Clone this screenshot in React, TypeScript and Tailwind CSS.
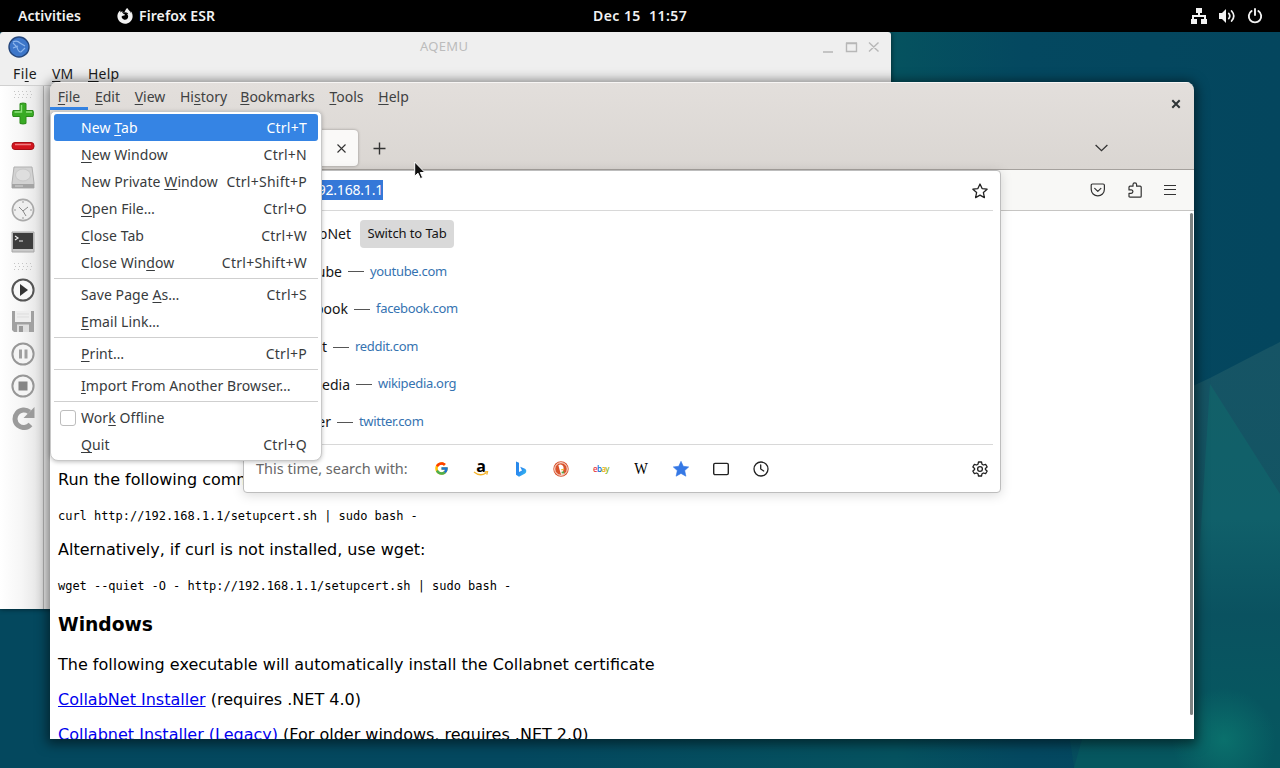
import type { ReactNode } from 'react';
import { FcGoogle } from 'react-icons/fc';
import { FaFirefoxBrowser } from 'react-icons/fa';

interface MenuEntry {
  label: string;
  accessKey: number;
  shortcut?: string;
  active?: boolean;
  checkbox?: boolean;
}

const fileMenu: MenuEntry[][] = [
  [
    { label: 'New Tab', accessKey: 4, shortcut: 'Ctrl+T', active: true },
    { label: 'New Window', accessKey: 0, shortcut: 'Ctrl+N' },
    { label: 'New Private Window', accessKey: 12, shortcut: 'Ctrl+Shift+P' },
    { label: 'Open File…', accessKey: 0, shortcut: 'Ctrl+O' },
    { label: 'Close Tab', accessKey: 0, shortcut: 'Ctrl+W' },
    { label: 'Close Window', accessKey: 9, shortcut: 'Ctrl+Shift+W' },
  ],
  [
    { label: 'Save Page As…', accessKey: 10, shortcut: 'Ctrl+S' },
    { label: 'Email Link…', accessKey: 0 },
  ],
  [{ label: 'Print…', accessKey: 0, shortcut: 'Ctrl+P' }],
  [{ label: 'Import From Another Browser…', accessKey: 0 }],
  [
    { label: 'Work Offline', accessKey: 3, checkbox: true },
    { label: 'Quit', accessKey: 0, shortcut: 'Ctrl+Q' },
  ],
];

const menuBar = [
  { label: 'File', accessKey: 0, width: 'w-[38px]' },
  { label: 'Edit', accessKey: 0, width: 'w-[39px]' },
  { label: 'View', accessKey: 0, width: 'w-[46px]' },
  { label: 'History', accessKey: 2, width: 'w-[61px]' },
  { label: 'Bookmarks', accessKey: 0, width: 'w-[87px]' },
  { label: 'Tools', accessKey: 0, width: 'w-[51px]' },
  { label: 'Help', accessKey: 0, width: 'w-[43px]' },
];

const topSites = [
  { title: 'YouTube', url: 'youtube.com', width: 'w-[91px]' },
  { title: 'Facebook', url: 'facebook.com', width: 'w-[97px]' },
  { title: 'Reddit', url: 'reddit.com', width: 'w-[76px]' },
  { title: 'Wikipedia', url: 'wikipedia.org', width: 'w-[99px]' },
  { title: 'Twitter', url: 'twitter.com', width: 'w-[80px]' },
];

function AccessLabel({ text, index }: { text: string; index: number }) {
  return (
    <span className="whitespace-pre">
      {text.slice(0, index)}
      <span className="underline decoration-1 underline-offset-2">{text[index]}</span>
      {text.slice(index + 1)}
    </span>
  );
}

function Wallpaper() {
  return (
    <svg className="absolute inset-0" width="1280" height="768" viewBox="0 0 1280 768">
      <defs>
        <linearGradient id="sky" x1="0" y1="0" x2="1" y2="0">
          <stop offset="0" stopColor="#04485e" />
          <stop offset="0.4" stopColor="#04485f" />
          <stop offset="0.7" stopColor="#05525f" />
          <stop offset="0.8" stopColor="#044860" />
          <stop offset="1" stopColor="#04465e" />
        </linearGradient>
        <linearGradient id="facet" x1="0" y1="0" x2="0" y2="1">
          <stop offset="0" stopColor="#165465" />
          <stop offset="0.5" stopColor="#125563" />
          <stop offset="1" stopColor="#045a60" />
        </linearGradient>
        <linearGradient id="ridge" x1="0" y1="0" x2="0" y2="1">
          <stop offset="0" stopColor="#126068" />
          <stop offset="0.35" stopColor="#10606a" />
          <stop offset="0.6" stopColor="#0a5260" />
          <stop offset="1" stopColor="#045a60" />
        </linearGradient>
        <radialGradient id="glow" cx="1224" cy="740" r="52" gradientUnits="userSpaceOnUse">
          <stop offset="0" stopColor="#0a706c" />
          <stop offset="1" stopColor="#0a706c" stopOpacity="0" />
        </radialGradient>
      </defs>
      <rect width="1280" height="768" fill="url(#sky)" />
      <path d="M1180 392 L1210 378 L1280 342 V768 H1074 Z" fill="url(#facet)" />
      <path d="M1210 384 L1280 494 V768 H1186 Z" fill="url(#ridge)" />
      <path d="M1064 700 L1074 768 H1280 V700 Z" fill="#07545e" fillOpacity="0.5" />
      <path d="M1100 640 H1280 V768 H1100 Z" fill="url(#glow)" />
    </svg>
  );
}

function TopBar() {
  return (
    <header className="relative z-10 flex h-8 items-center bg-black text-[14px] font-semibold text-[#f2f2f2]">
      <span className="ml-[18px] w-[99px] pb-[2px] tracking-[0.05px]">Activities</span>
      <FaFirefoxBrowser size={16} />
      <span className="ml-[6px] pb-[2px] tracking-[0.1px]">Firefox ESR</span>
      <span className="absolute left-[593px] whitespace-pre pb-[2px] tracking-[0.45px]">Dec 15  11:57</span>
      <div className="ml-auto mr-[17px] flex items-center gap-3">
        <svg width="16" height="16" viewBox="0 0 16 16" fill="#f2f2f2">
          <path d="M5 0h6v5H9v2h6v4h1v5h-6v-5h3V9H3v2h3v5H0v-5h1V7h6V5H5z" />
        </svg>
        <svg width="16" height="16" viewBox="0 0 16 16" fill="none" stroke="#f2f2f2" strokeWidth="1.7" strokeLinecap="round">
          <path d="M0 5h3l4-4v14l-4-4H0z" fill="#f2f2f2" stroke="none" />
          <path d="M9.8 5.5q2 2.5 0 5M12.6 3q4.4 5 0 10" />
        </svg>
        <svg width="16" height="16" viewBox="0 0 16 16" fill="none" stroke="#f2f2f2" strokeWidth="1.9" strokeLinecap="round">
          <path d="M4.6 3a6.2 6.2 0 1 0 6.8 0M8 1v6" />
        </svg>
      </div>
    </header>
  );
}

function ToolIcon({ children }: { children: ReactNode }) {
  return (
    <div className="flex h-8 items-center justify-center">
      <svg width="24" height="24" viewBox="0 0 24 24" fill="none">
        {children}
      </svg>
    </div>
  );
}

function Grip() {
  return (
    <svg width="18" height="7" viewBox="0 0 18 7" fill="#c4c4c4">
      {[0, 4, 8, 12, 16].map((x) => (
        <g key={x}>
          <rect x={x} y="0" width="1" height="1" />
          <rect x={x + 1} y="3" width="1" height="1" />
          <rect x={x} y="6" width="1" height="1" />
        </g>
      ))}
    </svg>
  );
}

function EmulatorToolbar() {
  return (
    <div className="flex w-[44px] flex-col border-r border-[#b4b4b4] bg-linear-to-r from-white via-[#f6f6f6] to-[#e3e3e3] pl-[2px]">
      <div className="flex h-3 items-center justify-center pt-1">
        <Grip />
      </div>
      <ToolIcon>
        <path d="M9 1.5q3-1 6 0v7h7q1 3 0 6h-7v7q-3 1-6 0v-7H2q-1-3 0-6h7z" fill="#38ab24" stroke="#2c8a1a" strokeLinejoin="round" />
        <path d="M10.5 3v7H3.500M15 10h6" stroke="#8fe27e" strokeWidth="1.4" />
      </ToolIcon>
      <ToolIcon>
        <rect x="1" y="8.500" width="22" height="7" rx="3" fill="#d3151e" stroke="#a50f16" />
        <path d="M4 10.500h16" stroke="#ef7d80" strokeWidth="1.500" />
      </ToolIcon>
      <ToolIcon>
        <path d="M3 1h18l2 16v5H1v-5z" fill="#d2d2d2" stroke="#b0b0b0" />
        <ellipse cx="12" cy="9" rx="7.500" ry="6" fill="#dedede" stroke="#c8c8c8" />
        <path d="M1 18h22v4H1z" fill="#a4a4a4" />
        <path d="M4 20h8" stroke="#d5d5d5" />
      </ToolIcon>
      <ToolIcon>
        <circle cx="12" cy="12" r="10.600" fill="#efefef" stroke="#a9a9a9" strokeWidth="1.600" />
        <path d="M12 3v2M12 19v2M3 12h2M19 12h2" stroke="#999" />
        <path d="M8 9l4 4 5-4M12 13l3 5" stroke="#888" />
      </ToolIcon>
      <ToolIcon>
        <path d="M1 2h22v20H1z" fill="#c9c9c9" stroke="#a8a8a8" />
        <path d="M2 3h20v16H2z" fill="#3d3d3d" />
        <path d="M4 6l3 2-3 2M8 11h4" stroke="#eee" strokeWidth="1.200" />
      </ToolIcon>
      <div className="flex h-4 items-center justify-center">
        <Grip />
      </div>
      <ToolIcon>
        <circle cx="12" cy="12" r="10.600" fill="#f7f7f7" stroke="#555" strokeWidth="2" />
        <path d="M9 6l8 6-8 6z" fill="#333" />
      </ToolIcon>
      <ToolIcon>
        <path d="M1 1h22v21H3l-2-2z" fill="#a1a1a1" />
        <path d="M4 1h16v11H4z" fill="#eee" />
        <path d="M6 4h12M6 7h12" stroke="#ddd" />
        <path d="M6 14.500h12v7.500H6z" fill="#dedede" />
        <path d="M8 16h4v6H8z" fill="#999" />
      </ToolIcon>
      <ToolIcon>
        <circle cx="12" cy="12" r="10.600" fill="#f4f4f4" stroke="#979797" strokeWidth="2" />
        <path d="M8 7.500h3v9H8zM13.500 7.500h3v9h-3z" fill="#a0a0a0" />
      </ToolIcon>
      <ToolIcon>
        <circle cx="12" cy="12" r="10.600" fill="#f4f4f4" stroke="#979797" strokeWidth="2" />
        <path d="M7.500 7.500h9v9h-9z" fill="#858585" />
      </ToolIcon>
      <ToolIcon>
        <path d="M19.500 18.500a8.800 8.800 0 1 1-1-12.500" stroke="#9b9b9b" strokeWidth="5" />
        <path d="M23.500 1v11H12.500z" fill="#9b9b9b" />
      </ToolIcon>
    </div>
  );
}

function EmulatorWindow() {
  return (
    <section className="absolute left-0 top-8 flex h-[577px] w-[891px] flex-col rounded-t-[3px] bg-[#efefef] shadow-[0_0_5px_rgba(0,0,0,0.6)]">
      <div className="flex h-[30px] items-center">
        <svg className="ml-2" width="22" height="22" viewBox="0 0 22 22">
          <circle cx="11" cy="11" r="10" fill="#3d76c9" stroke="#24467c" strokeWidth="1.4" />
          <path d="M5 6q4-2 7 1l5 3M5 7l4 4q1 5 4 5l4-4M10 10l-5 2" fill="none" stroke="#8eb7ed" strokeWidth="1.2" />
        </svg>
        <span className="ml-[390px] text-[13px] tracking-[0.3px] text-[#bcbcbc]">AQEMU</span>
        <svg className="ml-auto mr-[9px]" width="60" height="14" viewBox="0 0 60 14" fill="none" stroke="#b7b7b7" strokeWidth="1.4">
          <path d="M1 12h10M24.5 3.5h10v8h-10zM24 3h11M47 2.5l9.5 9M56.5 2.5l-9.5 9" />
        </svg>
      </div>
      <nav className="flex h-[23px] items-center text-[14px] text-[#1b1b1b]">
        <span className="ml-[13px] w-[39px] tracking-[0.4px]"><AccessLabel text="File" index={2} /></span>
        <span className="w-[36px]"><AccessLabel text="VM" index={0} /></span>
        <span className="tracking-[0.2px]"><AccessLabel text="Help" index={0} /></span>
      </nav>
      <div className="flex min-h-0 flex-1 border-t border-[#d0d0d0]">
        <EmulatorToolbar />
      </div>
    </section>
  );
}

function PageContent() {
  return (
    <article className="flex flex-1 flex-col overflow-hidden bg-white pl-2 pt-[259px] font-['DejaVu_Sans',sans-serif] text-[16px] leading-[19px] text-black">
      <p>Run the following command:</p>
      <pre className="mt-[20px] font-['DejaVu_Sans_Mono',monospace] text-[12px] leading-[14px] tracking-[-0.03px]">curl http://192.168.1.1/setupcert.sh | sudo bash -</pre>
      <p className="mt-[17px]">Alternatively, if curl is not installed, use wget:</p>
      <pre className="mt-[20px] font-['DejaVu_Sans_Mono',monospace] text-[12px] leading-[14px] tracking-[-0.03px]">wget --quiet -O - http://192.168.1.1/setupcert.sh | sudo bash -</pre>
      <h3 className="mt-[21px] text-[18.72px] font-bold leading-[22px]">Windows</h3>
      <p className="mt-[19px]">The following executable will automatically install the Collabnet certificate</p>
      <p className="mt-4"><a className="text-[#0000ee] underline">CollabNet Installer</a> (requires .NET 4.0)</p>
      <p className="mt-4 shrink-0"><a className="text-[#0000ee] underline">Collabnet Installer (Legacy)</a> (For older windows, requires .NET 2.0)</p>
    </article>
  );
}

function SearchEngines() {
  return (
    <div className="flex items-center">
      <span className="flex w-10 justify-center"><FcGoogle size={15} /></span>
      <span className="flex w-10 justify-center">
        <span className="relative h-4 w-4 text-center font-['Open_Sans',sans-serif] text-[16px] font-bold leading-[10px] text-black">
          a
          <svg className="absolute left-0 top-[10px]" width="16" height="6" viewBox="0 0 16 6" fill="none" stroke="#f5b32a" strokeWidth="1.3">
            <path d="M1 1q6 5 12 1M11.5 1l3-.3-.7 3" />
          </svg>
        </span>
      </span>
      <svg className="mx-3" width="16" height="16" viewBox="0 0 16 16">
        <defs>
          <linearGradient id="bing" x1="0" y1="0" x2="1" y2="1">
            <stop offset="0" stopColor="#2687e8" />
            <stop offset="0.5" stopColor="#2b8cf0" />
            <stop offset="1" stopColor="#35c5ee" />
          </linearGradient>
        </defs>
        <path d="M3 .5l3 1.2v9.300l3-1.5-1.800-3.700 4.800 1.900q1.800 1 1.200 3.300-.5 1.200-1.500 1.800L6 15.800l-3-2z" fill="url(#bing)" />
      </svg>
      <svg className="mx-3" width="16" height="16" viewBox="0 0 16 16">
        <circle cx="8" cy="8" r="7.700" fill="#d9532c" />
        <circle cx="8" cy="8" r="6.300" fill="none" stroke="#fff" strokeWidth=".9" />
        <path d="M5.400 4.200q2-1.500 4 0 1.500 1.200 1.200 3.800l-.6 2.200 1 3-2.800.6-1.400-4.300z" fill="#fff" />
        <path d="M8 8.200l3.200-.4v1L8.500 9.400z" fill="#f3b72b" />
        <path d="M8.500 10.800l2.500-.6.200 2-2.500.3z" fill="#5aa343" />
      </svg>
      <span className="flex w-10 justify-center text-[8px] font-medium leading-[12px] tracking-[-0.6px]">
        <span className="text-[#e53238]">e</span>
        <span className="text-[#0064d2]">b</span>
        <span className="text-[#e8a800]">a</span>
        <span className="text-[#86b817]">y</span>
      </span>
      <span className="flex w-10 scale-x-90 justify-center font-['Liberation_Serif',serif] text-[16px] leading-4 text-black">W</span>
      <svg className="mx-3" width="16" height="16" viewBox="0 0 16 16" fill="#3578e5">
        <path d="M8 .3l2.3 5 5.4.6-4 3.7 1.2 5.6L8 12.4l-4.9 2.8 1.2-5.6-4-3.7 5.4-.6z" stroke="#3578e5" strokeWidth=".6" strokeLinejoin="round" />
      </svg>
      <svg className="mx-3" width="16" height="16" viewBox="0 0 16 16" fill="none" stroke="#222" strokeWidth="1.4">
        <rect x=".7" y="2.4" width="14.6" height="11.2" rx="1.3" />
      </svg>
      <svg className="mx-3" width="16" height="16" viewBox="0 0 16 16" fill="none" stroke="#222" strokeWidth="1.3" strokeLinecap="round">
        <circle cx="8" cy="8" r="7" />
        <path d="M7.7 4v4l3 2" />
      </svg>
    </div>
  );
}

function UrlPopup() {
  return (
    <div className="absolute left-[193px] top-[88px] flex h-[323px] w-[758px] flex-col rounded-b-[4px] rounded-tr-[4px] border border-[#bdbdbd] bg-white px-[7px] text-[14px] text-[#151515] shadow-[0_2px_12px_rgba(0,0,0,0.15)]">
      <div className="flex h-10 items-center justify-between border-b border-[#d8d8d8]">
        <div className="flex w-[132px] justify-end pb-px">
          <span className="bg-[#3578d8] leading-5 text-white tracking-[-0.2px]">192.168.1.1</span>
        </div>
        <svg className="mr-[5px]" width="16" height="16" viewBox="0 0 16 16" fill="none" stroke="#222" strokeWidth="1.3" strokeLinejoin="round">
          <path d="M8 1l2.1 4.6 5 .6-3.7 3.4 1 5L8 12.1l-4.4 2.5 1-5L.9 6.2l5-.6z" />
        </svg>
      </div>
      <div className="flex h-[233px] flex-col pt-1">
        <div className="flex h-[37.6px] items-center">
          <span className="w-[100px] text-right">CollabNet</span>
          <span className="ml-[9px] flex h-7 w-[94px] items-center justify-center rounded-[4px] bg-[#d9d9d9] text-[13px] tracking-[-0.1px]">Switch to Tab</span>
        </div>
        {topSites.map((site) => (
          <div key={site.title} className="flex h-[37.6px] items-center">
            <span className={`text-right ${site.width}`}>{site.title}</span>
            <span className="mx-[6px] mt-px h-px w-4 bg-[#555]" />
            <span className="text-[13px] tracking-[-0.32px] text-[#3573b1]">{site.url}</span>
          </div>
        ))}
      </div>
      <div className="flex flex-1 items-center border-t border-[#d8d8d8]">
        <span className="ml-[5px] w-[165px] text-[14.5px] text-[#686868]">This time, search with:</span>
        <SearchEngines />
        <svg className="ml-auto mr-[5px]" width="16" height="16" viewBox="0 0 16 16" fill="none" stroke="#222" strokeWidth="1.3" strokeLinejoin="round">
          <path d="M6.5 1h3l.5 2.2 1.4.8 2.2-.7 1.5 2.6-1.7 1.5v1.2l1.7 1.5-1.5 2.6-2.200-.7-1.4.8-.5 2.2h-3L6 12.8l-1.4-.8-2.2.7L.9 10.100l1.700-1.500V7.400L.9 5.900l1.500-2.600 2.200.7L6 3.200z" />
          <circle cx="8" cy="8" r="2.4" />
        </svg>
      </div>
    </div>
  );
}

function FileMenu() {
  return (
    <div className="absolute left-0 top-[29px] flex w-[272px] flex-col rounded-b-[8px] rounded-t-[5px] border border-[#c8c8c8] bg-white px-[3px] py-[2px] text-[14px] text-[#383b3d] shadow-[0_1px_4px_rgba(0,0,0,0.25)]">
      {fileMenu.map((group, i) => (
        <div key={group[0].label} className={i > 0 ? 'mt-[2px] border-t border-[#cfcfcf] pt-[2px]' : ''}>
          {group.map((item) => (
            <div
              key={item.label}
              className={`flex h-[27px] items-center rounded-[3px] pr-[11px] ${item.active ? 'bg-[#3584e4] text-white' : ''}`}
            >
              <span className="flex w-[27px] shrink-0 pl-[6px]">
                {item.checkbox && <span className="h-4 w-4 rounded-[3px] border border-[#bdbdbd] bg-white" />}
              </span>
              <span className="tracking-[0.08px]">
                <AccessLabel text={item.label} index={item.accessKey} />
              </span>
              <span className="ml-auto tracking-[0.25px]">{item.shortcut}</span>
            </div>
          ))}
        </div>
      ))}
    </div>
  );
}

function FirefoxWindow() {
  return (
    <section className="absolute left-[50px] top-[82px] h-[657px] w-[1144px] rounded-t-[8px] shadow-[0_2px_12px_3px_rgba(0,0,0,0.5)]">
      <div className="flex h-full flex-col overflow-hidden rounded-t-[8px]">
        <div className="flex h-[88px] flex-col border-b border-[#a5a19d] bg-linear-to-b from-[#e3dfdc] to-[#dad6d2] shadow-[inset_0_1px_0_#f7f5f4]">
          <div className="flex h-[44px] justify-between">
            <nav className="flex h-[28px] text-[14px] text-[#3f4142]">
              {menuBar.map((item, i) => (
                <span
                  key={item.label}
                  className={`flex items-center justify-center border-b-[3px] pt-[3px] ${item.width} ${i === 0 ? 'border-[#3584e4]' : 'border-transparent'}`}
                >
                  <AccessLabel text={item.label} index={item.accessKey} />
                </span>
              ))}
            </nav>
            <svg className="mr-[13px] mt-[17px]" width="10" height="10" viewBox="0 0 10 10" stroke="#2e3436" strokeWidth="2">
              <path d="M1.3 1.3l7.4 7.4M8.7 1.3L1.3 8.7" />
            </svg>
          </div>
          <div className="flex h-[43px] items-center pt-px">
            <div className="ml-1 flex h-9 w-[304px] items-center justify-end rounded-[4px] bg-[#faf9f8] pr-3 shadow-[0_0_3px_rgba(0,0,0,0.35)]">
              <svg width="9" height="9" viewBox="0 0 9 9" stroke="#333" strokeWidth="1.1">
                <path d="M.5.5l8 8M8.5.5l-8 8" />
              </svg>
            </div>
            <svg className="ml-[15px]" width="13" height="13" viewBox="0 0 13 13" stroke="#333" strokeWidth="1.4">
              <path d="M6.5.5v12M.5 6.5h12" />
            </svg>
            <svg className="ml-auto mr-[86px]" width="13" height="8" viewBox="0 0 13 8" fill="none" stroke="#333" strokeWidth="1.3">
              <path d="M.6 1l5.9 5.700L12.400 1" />
            </svg>
          </div>
        </div>
        <div className="flex h-[41px] items-center justify-end border-b border-[#c6c5c3] bg-[#f8f8f6]">
          <svg className="mr-[21px]" width="16" height="16" viewBox="0 0 16 16" fill="none" stroke="#333" strokeWidth="1.2" strokeLinecap="round" strokeLinejoin="round">
            <path d="M2.500 2h10.600q1.300 0 1.300 1.300v4A6.600 6.600 0 0 1 1.200 7.300v-4Q1.200 2 2.500 2zM4.700 6.300L7.800 9.400l3.100-3.100" />
          </svg>
          <svg className="mr-[21px]" width="16" height="16" viewBox="0 0 16 16" fill="none" stroke="#333" strokeWidth="1.200" strokeLinejoin="round">
            <path d="M3 15.200q-1 0-1-1v-2.900h2.200a1.700 1.700 0 0 0 0-3.400H2V5.200q0-1 1-1h3V2.600a1.800 1.800 0 0 1 3.600 0v1.600h3.600q1 0 1 1v9q0 1-1 1z" />
          </svg>
          <svg className="mr-[18px]" width="12" height="12" viewBox="0 0 12 12" stroke="#333" strokeWidth="1.2">
            <path d="M0 1.500h12M0 5.500h12M0 10.500h12" />
          </svg>
        </div>
        <div className="flex min-h-0 flex-1 bg-white">
          <PageContent />
          <div className="mr-px mt-[2px] h-[502px] w-[3px] rounded-full bg-[#7d8282]" />
        </div>
      </div>
      <UrlPopup />
      <FileMenu />
    </section>
  );
}

export default function App() {
  return (
    <main className="relative h-[768px] w-[1280px] overflow-hidden font-['Noto_Sans',sans-serif]">
      <Wallpaper />
      <TopBar />
      <EmulatorWindow />
      <FirefoxWindow />
      <svg className="absolute left-[414px] top-[161px]" width="12" height="19" viewBox="0 0 12 19">
        <path d="M.7 1v14.2l3.3-3 2.4 5.4 2.2-1-2.3-5.1h4.6z" fill="#111" stroke="#fff" strokeWidth="1" />
      </svg>
    </main>
  );
}
